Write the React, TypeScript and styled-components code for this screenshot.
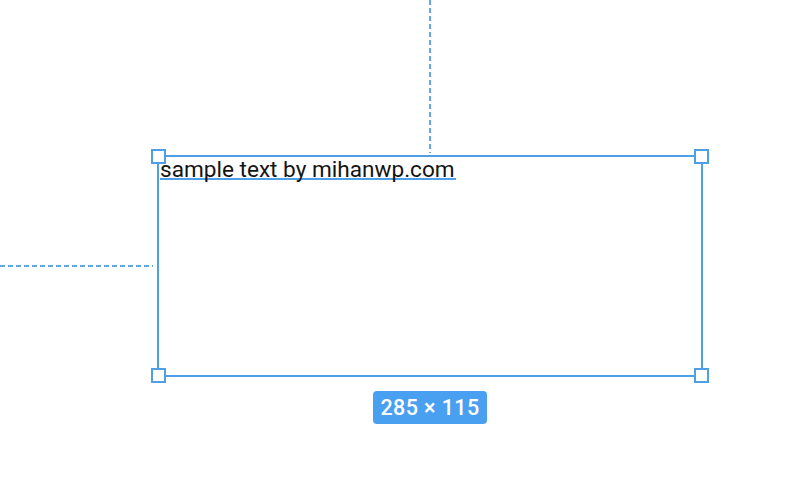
import React from 'react';
import styled, { createGlobalStyle } from 'styled-components';

const accent = '#4f9fe6';
const guide = '#5ea8e6';

const GlobalStyle = createGlobalStyle`
  html, body {
    margin: 0;
    padding: 0;
    background: #ffffff;
    font-family: Roboto, 'Noto Sans', 'Liberation Sans', sans-serif;
  }
`;

const Canvas = styled.div`
  position: relative;
  width: 812px;
  height: 490px;
  overflow: hidden;
  background: #ffffff;
`;

const VerticalGuide = styled.div`
  position: absolute;
  left: 429px;
  top: 0;
  width: 2px;
  height: 153px;
  background: repeating-linear-gradient(
    to bottom,
    ${guide} 0 5px,
    transparent 5px 8px
  );
`;

const HorizontalGuide = styled.div`
  position: absolute;
  left: 0;
  top: 265px;
  width: 153px;
  height: 2px;
  background: repeating-linear-gradient(
    to right,
    ${guide} 0 5px,
    transparent 5px 8px
  );
`;

const Frame = styled.div`
  position: absolute;
  box-sizing: border-box;
  left: 157px;
  top: 155px;
  width: 546px;
  height: 222px;
  border: 2px solid ${accent};
  padding: 4px 2px 0 1px;
`;

const TextLayer = styled.span`
  display: inline-block;
  font-size: 22.6px;
  line-height: 17px;
  color: #141414;
  border-bottom: 2px solid ${accent};
  padding-right: 1px;
`;

type Corner = 'tl' | 'tr' | 'bl' | 'br';

const Handle = styled.div<{ $corner: Corner }>`
  position: absolute;
  width: 11px;
  height: 11px;
  background: #ffffff;
  border: 2px solid ${accent};
  ${({ $corner }) => ($corner[0] === 't' ? 'top: -8px;' : 'bottom: -8px;')}
  ${({ $corner }) => ($corner[1] === 'l' ? 'left: -8px;' : 'right: -8px;')}
`;

const SizeBadge = styled.div`
  position: absolute;
  top: calc(100% + 16px);
  left: 50%;
  transform: translateX(-50%);
  box-sizing: border-box;
  width: 114px;
  height: 33px;
  display: flex;
  align-items: center;
  justify-content: center;
  border-radius: 4px;
  background: #4aa0f0;
  color: #ffffff;
  font-size: 21.5px;
  font-weight: 500;
  letter-spacing: 0.4px;
  white-space: nowrap;
`;

export default function App() {
  return (
    <>
      <GlobalStyle />
      <Canvas>
        <VerticalGuide />
        <HorizontalGuide />
        <Frame>
          <TextLayer>sample text by mihanwp.com</TextLayer>
          {(['tl', 'tr', 'bl', 'br'] as Corner[]).map((c) => (
            <Handle key={c} $corner={c} />
          ))}
          <SizeBadge>285 × 115</SizeBadge>
        </Frame>
      </Canvas>
    </>
  );
}
